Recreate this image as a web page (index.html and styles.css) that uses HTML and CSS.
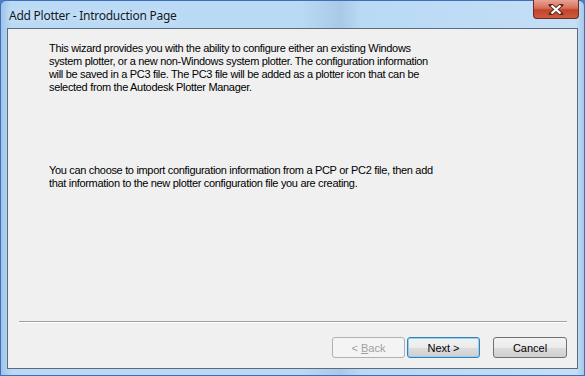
FILE: index.html
```html
<!DOCTYPE html>
<html lang="en">
<head>
<meta charset="UTF-8">
<title>Add Plotter - Introduction Page</title>
<link rel="stylesheet" href="styles.css">
</head>
<body>
<div class="window">
    <div class="titlebar">
        <div class="title">Add Plotter - Introduction Page</div>
        <div class="close">
            <svg width="18" height="11" viewBox="0 0 18 11">
                <path d="M4 1 L14 10 M14 1 L4 10" stroke="#5a2a22" stroke-width="4" stroke-linecap="square"/>
                <path d="M4.5 1.5 L13.5 9.5 M13.5 1.5 L4.5 9.5" stroke="#ffffff" stroke-width="2.2"/>
            </svg>
        </div>
    </div>
    <div class="client">
        <div class="intro">
            <p class="para">This wizard provides you with the ability to configure either an existing Windows<br>
            system plotter, or a new non-Windows system plotter. The configuration information<br>
            will be saved in a PC3 file. The PC3 file will be added as a plotter icon that can be<br>
            selected from the Autodesk Plotter Manager.</p>
            <p class="para second">You can choose to import configuration information from a PCP or PC2 file, then add<br>
            that information to the new plotter configuration file you are creating.</p>
        </div>
        <div class="footer">
            <div class="separator"></div>
            <div class="buttons">
                <button class="btn back" disabled>&lt; <u>B</u>ack</button>
                <button class="btn default">Next &gt;</button>
                <button class="btn cancel">Cancel</button>
            </div>
        </div>
    </div>
</div>
</body>
</html>
```
FILE: styles.css
```css
body {
    margin: 0;
    padding: 0;
    background: #4a7cc8;
    font-family: "Liberation Sans", Arial, sans-serif;
}
.window {
    width: 585px;
    height: 376px;
    box-sizing: border-box;
    border: 1px solid #3f6fb9;
    border-radius: 6px 6px 0 0;
    background: linear-gradient(to right, #9ec4ea 0px, #b9d9f5 10px, #b9d9f5 300px, #a9c9e6 340px, #b9d9f5 360px, #c4dff6 575px, #9ec4ea 585px);
    padding: 0 6px 6px 6px;
    display: flex;
    flex-direction: column;
}
.titlebar {
    height: 27px;
    display: flex;
    justify-content: space-between;
    align-items: flex-start;
}
.title {
    font-family: "Noto Sans", "Liberation Sans", sans-serif;
    font-size: 12px;
    letter-spacing: -0.25px;
    color: #101a28;
    margin-top: 6px;
    margin-left: 2px;
    text-shadow: 0 0 6px #e8f4ff;
}
.close {
    width: 44px;
    height: 18px;
    margin-top: -1px;
    margin-right: -1px;
    border: 1px solid #6b2d25;
    border-top: none;
    border-radius: 0 0 4px 4px;
    background: linear-gradient(#e8a394 0%, #d86f5a 45%, #c2432c 55%, #cd5a3e 100%);
    display: flex;
    align-items: center;
    justify-content: center;
}
.client {
    flex: 1;
    background: #f0f0f0;
    border: 1px solid #5b6a7e;
    display: flex;
    flex-direction: column;
    padding: 13px 0 0 41px;
}
.para {
    margin: 0;
    font-size: 11px;
    line-height: 13px;
    letter-spacing: -0.32px;
    color: #000;
}
.second {
    margin-top: 70px;
}
.footer {
    margin-top: auto;
    padding-right: 10px;
    padding-bottom: 10px;
}
.separator {
    margin-left: -30px;
    border-top: 1px solid #a0a0a0;
    border-bottom: 1px solid #ffffff;
}
.buttons {
    display: flex;
    justify-content: flex-end;
    margin-top: 14px;
}
.btn {
    width: 74px;
    height: 21px;
    font-family: "Liberation Sans", Arial, sans-serif;
    font-size: 11px;
    color: #000;
    background: linear-gradient(#f2f2f2 0%, #ebebeb 50%, #dddddd 51%, #cfcfcf 100%);
    border: 1px solid #707070;
    border-radius: 3px;
    padding: 0;
}
.btn:disabled {
    color: #a0a0a0;
    background: #f4f4f4;
    border-color: #adb2b5;
}
.back {
    width: 73px;
}
.default {
    margin-left: 2px;
    width: 73px;
    border-color: #3c7fb1;
    box-shadow: inset 0 0 0 1px #8ed2f6;
}
.cancel {
    margin-left: 13px;
}
```
